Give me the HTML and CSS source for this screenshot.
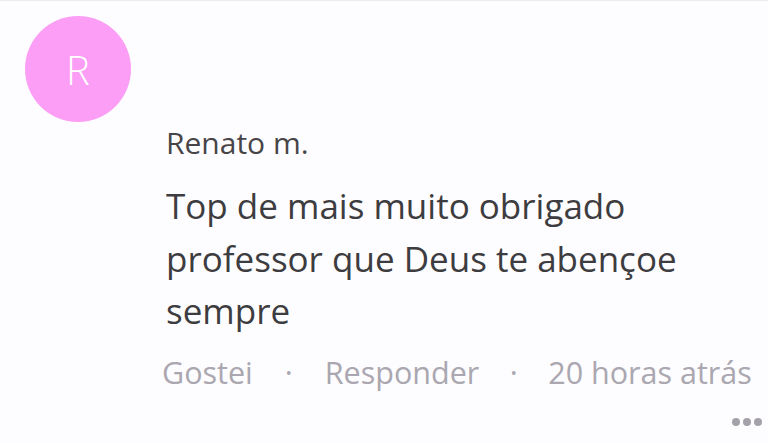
FILE: index.html
```
<!DOCTYPE html>
<html lang="pt">
<head>
<meta charset="utf-8">
<link rel="stylesheet" href="styles.css">
</head>
<body>
<div class="comment">
  <div class="avatar">R</div>
  <div class="content">
    <div class="name">Renato m.</div>
    <p class="text">Top de mais muito obrigado professor que Deus te abençoe sempre</p>
    <div class="actions">
      <span class="action">Gostei</span>
      <span class="sep">·</span>
      <span class="action">Responder</span>
      <span class="sep sep-narrow">·</span>
      <span class="time">20 horas atrás</span>
    </div>
    <div class="more"><span></span><span></span><span></span></div>
  </div>
</div>
</body>
</html>
```
FILE: styles.css
```
html, body {
  margin: 0;
  padding: 0;
  background: #fdfcfe;
  font-family: "Open Sans", "Noto Sans", sans-serif;
}
body {
  width: 768px;
  height: 443px;
  overflow: hidden;
  border-top: 1px solid #ececef;
  box-sizing: border-box;
}
.comment {
  padding: 15px 0 0 25px;
}
.avatar {
  width: 106px;
  height: 106px;
  border-radius: 50%;
  background: #fc9df6;
  color: #ffffff;
  font-size: 40px;
  font-weight: 300;
  display: flex;
  align-items: center;
  justify-content: center;
}
.content {
  margin-left: 141px;
  margin-top: 1px;
  padding-right: 16px;
}
.name {
  font-size: 30px;
  line-height: 40px;
  color: #474548;
}
.text {
  margin: 17px 0 0 0;
  font-size: 35px;
  line-height: 52.5px;
  color: #3d3c40;
}
.actions {
  margin-top: 14px;
  margin-left: -4px;
  display: flex;
  align-items: baseline;
  white-space: nowrap;
  font-size: 30.5px;
  line-height: 40px;
  color: #aaa7b0;
}
.sep {
  margin: 0 32px;
}
.sep-narrow {
  margin: 0 30.5px;
}
.more {
  display: flex;
  justify-content: flex-end;
  gap: 3px;
  margin-top: 26px;
  margin-right: -10px;
}
.more span {
  width: 8px;
  height: 8px;
  border-radius: 50%;
  background: #a4a1aa;
}
```
